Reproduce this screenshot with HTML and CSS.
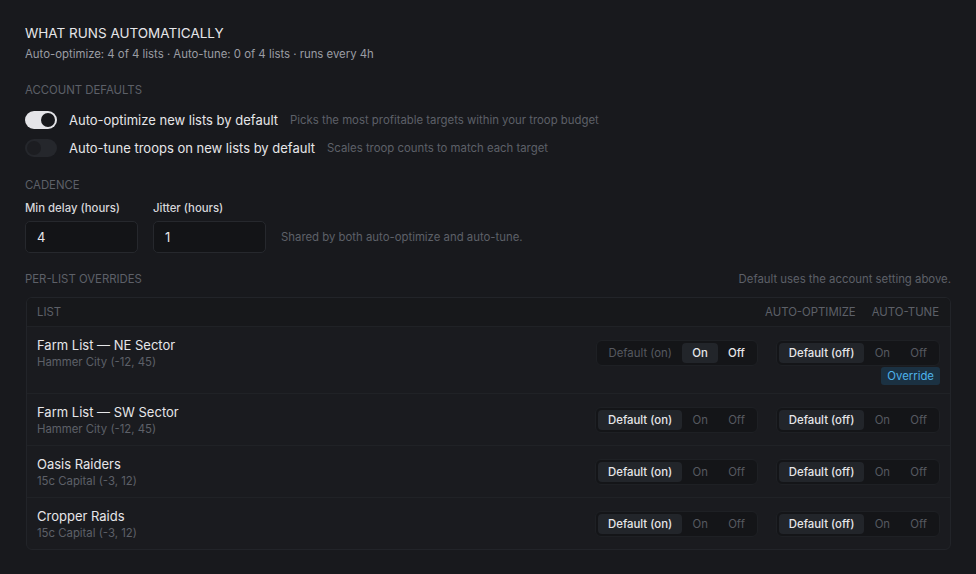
FILE: index.html
```html
<!DOCTYPE html>
<html lang="en">
<head>
    <meta charset="UTF-8"/>
    <meta name="viewport" content="width=device-width, initial-scale=1.0"/>
    <title>Automation</title>
    <link rel="stylesheet" href="styles.css">
</head>
<body>
<div class="page">
    <h2 class="title">What runs automatically</h2>
    <p class="summary">Auto-optimize: 4 of 4 lists · Auto-tune: 0 of 4 lists · runs every 4h</p>

    <!-- account defaults -->
    <h3 class="section">Account defaults</h3>
    <div class="switch-row">
        <span class="switch on"><span class="knob"></span></span>
        <span class="switch-label">Auto-optimize new lists by default</span>
        <span class="hint">Picks the most profitable targets within your troop budget</span>
    </div>
    <div class="switch-row">
        <span class="switch"><span class="knob"></span></span>
        <span class="switch-label">Auto-tune troops on new lists by default</span>
        <span class="hint">Scales troop counts to match each target</span>
    </div>

    <!-- cadence -->
    <h3 class="section cadence-title">Cadence</h3>
    <div class="cadence">
        <label class="field">
            <span class="field-label">Min delay (hours)</span>
            <input type="text" value="4"/>
        </label>
        <label class="field">
            <span class="field-label">Jitter (hours)</span>
            <input type="text" value="1"/>
        </label>
        <span class="hint cadence-hint">Shared by both auto-optimize and auto-tune.</span>
    </div>

    <!-- overrides -->
    <div class="overrides-head">
        <h3 class="section">Per-list overrides</h3>
        <span class="hint">Default uses the account setting above.</span>
    </div>
    <div class="table">
        <div class="table-head">
            <span>List</span>
            <div class="head-cols">
                <span>Auto-optimize</span>
                <span>Auto-tune</span>
            </div>
        </div>

        <div class="row">
            <div class="list-name">
                <div class="name">Farm List — NE Sector</div>
                <div class="village">Hammer City (-12, 45)</div>
            </div>
            <div class="controls">
                <div class="seg-pair">
                    <div class="seg">
                        <span class="opt">Default (on)</span>
                        <span class="opt active">On</span>
                        <span class="opt bright">Off</span>
                    </div>
                    <div class="seg">
                        <span class="opt active">Default (off)</span>
                        <span class="opt">On</span>
                        <span class="opt">Off</span>
                    </div>
                </div>
                <span class="badge">Override</span>
            </div>
        </div>

        <div class="row">
            <div class="list-name">
                <div class="name">Farm List — SW Sector</div>
                <div class="village">Hammer City (-12, 45)</div>
            </div>
            <div class="controls">
                <div class="seg-pair">
                    <div class="seg">
                        <span class="opt active">Default (on)</span>
                        <span class="opt">On</span>
                        <span class="opt">Off</span>
                    </div>
                    <div class="seg">
                        <span class="opt active">Default (off)</span>
                        <span class="opt">On</span>
                        <span class="opt">Off</span>
                    </div>
                </div>
            </div>
        </div>

        <div class="row">
            <div class="list-name">
                <div class="name">Oasis Raiders</div>
                <div class="village">15c Capital (-3, 12)</div>
            </div>
            <div class="controls">
                <div class="seg-pair">
                    <div class="seg">
                        <span class="opt active">Default (on)</span>
                        <span class="opt">On</span>
                        <span class="opt">Off</span>
                    </div>
                    <div class="seg">
                        <span class="opt active">Default (off)</span>
                        <span class="opt">On</span>
                        <span class="opt">Off</span>
                    </div>
                </div>
            </div>
        </div>

        <div class="row">
            <div class="list-name">
                <div class="name">Cropper Raids</div>
                <div class="village">15c Capital (-3, 12)</div>
            </div>
            <div class="controls">
                <div class="seg-pair">
                    <div class="seg">
                        <span class="opt active">Default (on)</span>
                        <span class="opt">On</span>
                        <span class="opt">Off</span>
                    </div>
                    <div class="seg">
                        <span class="opt active">Default (off)</span>
                        <span class="opt">On</span>
                        <span class="opt">Off</span>
                    </div>
                </div>
            </div>
        </div>
    </div>
</div>
</body>
</html>
```

FILE: styles.css
```css
body {
    margin: 0;
    background-color: #18191d;
    color: #e4e4e7;
    font-family: Inter, "Noto Sans", sans-serif;
}

.page {
    padding: 24px 25px 20px 25px;
}

.title {
    margin: 0;
    font-size: 13.5px;
    font-weight: 400;
    line-height: 18px;
    text-transform: uppercase;
    color: #e6e6e9;
}

.summary {
    margin: 4px 0 0 0;
    font-size: 11.36px;
    line-height: 16px;
    color: #9b9da4;
}

.section {
    margin: 20px 0 8px 0;
    font-size: 11.36px;
    font-weight: 400;
    line-height: 16px;
    text-transform: uppercase;
    color: #5d6068;
}

.hint {
    font-size: 11.36px;
    line-height: 16px;
    color: #5d6068;
}

/* toggles */
.switch-row {
    display: flex;
    align-items: center;
    height: 28px;
}

.switch {
    position: relative;
    width: 32px;
    height: 18px;
    border-radius: 9px;
    background-color: #25272c;
    flex-shrink: 0;
}

.switch .knob {
    position: absolute;
    top: 2px;
    left: 2px;
    width: 14px;
    height: 14px;
    border-radius: 50%;
    background-color: #1c1d21;
}

.switch.on {
    background-color: #e4e4e8;
}

.switch.on .knob {
    left: 16px;
    background-color: #17181c;
}

.switch-label {
    margin-left: 12px;
    margin-right: 12px;
    font-size: 13px;
    line-height: 18px;
    color: #e6e6e9;
}

/* cadence */
.cadence-title {
    margin-top: 15px;
    margin-bottom: 7px;
}

.cadence {
    display: flex;
    align-items: flex-end;
    gap: 15px;
}

.field {
    display: flex;
    flex-direction: column;
}

.field-label {
    font-size: 11.36px;
    font-weight: 500;
    line-height: 16px;
    color: #d6d6da;
    margin-bottom: 5px;
}

.field input {
    box-sizing: border-box;
    width: 113px;
    height: 32px;
    padding: 0 11px;
    border: 1px solid #26282d;
    border-radius: 5px;
    background-color: #131417;
    color: #e6e6e9;
    font-family: inherit;
    font-size: 13px;
    outline: none;
}

.cadence-hint {
    line-height: 32px;
}

/* overrides table */
.overrides-head {
    display: flex;
    justify-content: space-between;
    align-items: baseline;
    margin-top: 18px;
}

.overrides-head .section {
    margin: 0 0 10px 0;
}

.table {
    margin-left: 1px;
    border: 1px solid #222429;
    border-radius: 6px;
    background-color: #1a1b1f;
    overflow: hidden;
}

.table-head {
    display: flex;
    justify-content: space-between;
    align-items: center;
    height: 28px;
    padding: 0 11px 0 10px;
    background-color: #17181b;
    font-size: 11.36px;
    text-transform: uppercase;
    color: #5d6068;
}

.head-cols {
    display: flex;
    gap: 16px;
}

.row {
    display: flex;
    justify-content: space-between;
    align-items: flex-start;
    padding: 9px 10px 8px 10px;
    border-top: 1px solid #202226;
}

.name {
    font-size: 13px;
    line-height: 18px;
    color: #e6e6e9;
}

.village {
    font-size: 11.36px;
    line-height: 16px;
    color: #5d6068;
}

.controls {
    display: flex;
    flex-direction: column;
    align-items: flex-end;
    gap: 1px;
    margin-top: 4px;
}

.seg-pair {
    display: flex;
    gap: 18px;
}

.seg {
    display: flex;
    padding: 2px;
    border: 1px solid #1e2024;
    border-radius: 6px;
    background-color: #141518;
}

.opt {
    padding: 0 10px;
    min-width: 16px;
    text-align: center;
    font-size: 11.36px;
    line-height: 20px;
    border-radius: 4px;
    color: #565960;
}

.opt.active {
    background-color: #22252a;
    color: #e6e6e9;
    font-weight: 500;
}

.opt.bright {
    color: #e6e6e9;
    font-weight: 500;
}

.badge {
    padding: 0 6px;
    border-radius: 3px;
    background-color: #1b3142;
    color: #4db2ea;
    font-size: 11.36px;
    line-height: 18px;
}
```
